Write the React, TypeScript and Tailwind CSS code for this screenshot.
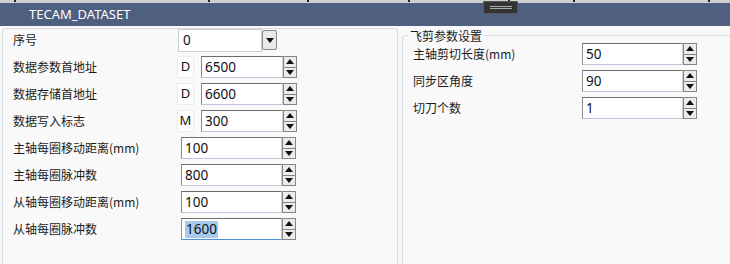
import React from "react";

const cjk = { fontFamily: '"Noto Sans CJK SC", "Noto Sans", sans-serif' };
const latin = { fontFamily: '"Noto Sans", "Noto Sans CJK SC", sans-serif' };

function Tri({ up }: { up?: boolean }) {
  return (
    <svg width="8" height="5" viewBox="0 0 8 5">
      <path d={up ? "M0 5 L4 0 L8 5 Z" : "M0 0 L8 0 L4 5 Z"} fill="#111" />
    </svg>
  );
}

function Spinner() {
  return (
    <div className="w-[14px] h-[22px] bg-[#858585] p-[1px] flex flex-col gap-[1px]">
      <div className="flex-1 bg-[#ececec] flex items-center justify-center">
        <Tri up />
      </div>
      <div className="flex-1 bg-[#ececec] flex items-center justify-center">
        <Tri />
      </div>
    </div>
  );
}

function NumInput({ value, w, selected }: { value: string; w: string; selected?: boolean }) {
  return (
    <div className="flex items-center">
      <div
        className={`${w} h-[22px] bg-white border flex items-center pl-[3px] text-[13.5px] text-[#111] ${
          selected
            ? "border-t-[#6d6d6d] border-l-[#6f9bd0] border-r-[#c9c9c9] border-b-[#4f8fd6]"
            : "border-t-[#6d6d6d] border-l-[#8a8a8a] border-r-[#d0d0d0] border-b-[#c3c3dc]"
        }`}
        style={latin}
      >
        {selected ? <span className="bg-[#a6cbef] px-[1px] leading-[17px]">{value}</span> : value}
      </div>
      <Spinner />
    </div>
  );
}

function Row({ label, children, lw }: { label: string; children: React.ReactNode; lw: string }) {
  return (
    <div className="flex items-center h-[22px]">
      <div className={`${lw} text-[12px] text-[#1b1b1b] shrink-0`} style={cjk}>
        {label}
      </div>
      {children}
    </div>
  );
}

function Prefix({ c }: { c: string }) {
  return (
    <div
      className="w-[17px] h-[22px] bg-white border border-[#ececec] flex items-center justify-center text-[13px] text-[#111] mr-[7px]"
      style={latin}
    >
      {c}
    </div>
  );
}

export default function App() {
  const ticks = [14, 208, 307, 408, 508, 573, 708];
  return (
    <div className="w-[730px] h-[264px] overflow-hidden bg-[#f9f9f9] flex flex-col">
      <div className="relative h-[3px] bg-[#cfcfcf] shrink-0">
        {ticks.map((x) => (
          <div key={x} className="absolute top-0 w-[2px] h-[2px] bg-[#222]" style={{ left: x }} />
        ))}
      </div>
      <div className="relative h-[23px] bg-[#4e5f7f] shrink-0 flex items-center pl-[29px]">
        <span className="text-white text-[13px]" style={latin}>
          TECAM_DATASET
        </span>
        <div className="absolute left-[483px] top-[-2px] w-[35px] h-[13px] bg-[#333] border border-[#5a5a5a] flex flex-col items-center justify-center gap-[1px]">
          <div className="w-[22px] h-px bg-[#aaa]" />
          <div className="w-[22px] h-px bg-[#aaa]" />
        </div>
      </div>
      <div className="flex flex-1 pt-[2px]">
        <div className="ml-[2px] w-[396px] shrink-0 border border-b-0 border-[#d5dbe2] rounded-t-[4px] pl-[10px] flex flex-col gap-[5px]">
          <Row label="序号" lw="w-[165px]">
            <div className="flex items-center">
              <div
                className="w-[84px] h-[23px] bg-white border border-[#cdcdcd] flex items-center pl-[4px] text-[13.5px] text-[#111]"
                style={latin}
              >
                0
              </div>
              <div className="w-[15px] h-[20px] bg-[#e9e9e9] border border-[#8a8a8a] rounded-[2px] flex items-center justify-center">
                <Tri />
              </div>
            </div>
          </Row>
          <Row label="数据参数首地址" lw="w-[164px]">
            <Prefix c="D" />
            <NumInput value="6500" w="w-[82px]" />
          </Row>
          <Row label="数据存储首地址" lw="w-[164px]">
            <Prefix c="D" />
            <NumInput value="6600" w="w-[82px]" />
          </Row>
          <Row label="数据写入标志" lw="w-[164px]">
            <Prefix c="M" />
            <NumInput value="300" w="w-[82px]" />
          </Row>
          <Row label="主轴每圈移动距离(mm)" lw="w-[168px]">
            <NumInput value="100" w="w-[101px]" />
          </Row>
          <Row label="主轴每圈脉冲数" lw="w-[168px]">
            <NumInput value="800" w="w-[101px]" />
          </Row>
          <Row label="从轴每圈移动距离(mm)" lw="w-[168px]">
            <NumInput value="100" w="w-[101px]" />
          </Row>
          <Row label="从轴每圈脉冲数" lw="w-[168px]">
            <NumInput value="1600" w="w-[101px]" selected />
          </Row>
        </div>
        <fieldset className="ml-[4px] w-[340px] shrink-0 border border-b-0 border-r-0 border-[#d5dbe2] rounded-tl-[4px] px-[5px] flex flex-col">
          <legend className="px-[2px] text-[12px] text-[#1b1b1b] leading-[15px]" style={cjk}>
            飞剪参数设置
          </legend>
          <div className="pl-[5px] flex flex-col gap-[5px]">
            <Row label="主轴剪切长度(mm)" lw="w-[169px]">
              <NumInput value="50" w="w-[101px]" />
            </Row>
            <Row label="同步区角度" lw="w-[169px]">
              <NumInput value="90" w="w-[101px]" />
            </Row>
            <Row label="切刀个数" lw="w-[169px]">
              <NumInput value="1" w="w-[101px]" />
            </Row>
          </div>
        </fieldset>
      </div>
    </div>
  );
}
